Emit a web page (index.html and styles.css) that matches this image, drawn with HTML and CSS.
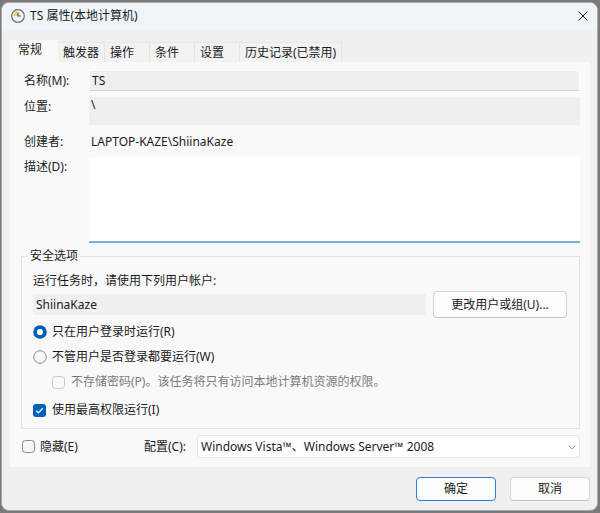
FILE: index.html
```html
<!DOCTYPE html>
<html>

<head>
    <meta charset="UTF-8">
    <title>TS 属性(本地计算机)</title>
    <link rel="stylesheet" href="styles.css">
</head>

<body>
    <div class="window">
        <div class="titlebar">
            <svg class="appIcon" width="14" height="14" viewBox="0 0 14 14">
                <circle cx="7" cy="7" r="6.3" fill="#f4f4f4" stroke="#6b6b6b" stroke-width="1.2"/>
                <path d="M7 7V2.3A4.7 4.7 0 0 0 2.3 7Z" fill="#f1cd72"/>
                <path d="M7 3.4V7h2.8" fill="none" stroke="#4a4a4a" stroke-width="1.1"/>
            </svg>
            <span class="title">TS 属性(本地计算机)</span>
            <svg class="closeIcon" width="10" height="10" viewBox="0 0 10 10">
                <path d="M0.5 0.5l9 9M9.5 0.5l-9 9" stroke="#1a1a1a" stroke-width="1"/>
            </svg>
        </div>
        <div class="content">
            <div class="tabs">
                <div class="tab active">常规</div>
                <div class="tab">触发器</div>
                <div class="tab">操作</div>
                <div class="tab">条件</div>
                <div class="tab">设置</div>
                <div class="tab">历史记录(已禁用)</div>
            </div>
            <div class="panel">
                <div class="row">
                    <label class="label">名称(M):</label>
                    <div class="field nameField">TS</div>
                </div>
                <div class="row topRow locationRow">
                    <label class="label">位置:</label>
                    <div class="field locationField">\</div>
                </div>
                <div class="row creatorRow">
                    <label class="label">创建者:</label>
                    <div class="field plainField">LAPTOP-KAZE\ShiinaKaze</div>
                </div>
                <div class="row topRow descRow">
                    <label class="label">描述(D):</label>
                    <div class="field descField"></div>
                </div>
                <fieldset class="group">
                    <legend>安全选项</legend>
                    <div class="groupText">运行任务时，请使用下列用户帐户:</div>
                    <div class="userRow">
                        <div class="userField">ShiinaKaze</div>
                        <button class="btn userBtn">更改用户或组(U)...</button>
                    </div>
                    <div class="option firstOption">
                        <svg class="mark" width="14" height="14" viewBox="0 0 14 14">
                            <circle cx="7" cy="7" r="6.8" fill="#005fb8"/>
                            <circle cx="7" cy="7" r="3.1" fill="#ffffff"/>
                        </svg>
                        <span>只在用户登录时运行(R)</span>
                    </div>
                    <div class="option">
                        <svg class="mark" width="14" height="14" viewBox="0 0 14 14">
                            <circle cx="7" cy="7" r="6.3" fill="#f6f6f6" stroke="#8a8a8a" stroke-width="1"/>
                        </svg>
                        <span>不管用户是否登录都要运行(W)</span>
                    </div>
                    <div class="option disabled">
                        <svg class="mark box" width="13" height="13" viewBox="0 0 13 13">
                            <rect x="0.5" y="0.5" width="12" height="12" rx="3" fill="#f9f9f9" stroke="#c8c8c8"/>
                        </svg>
                        <span>不存储密码(P)。该任务将只有访问本地计算机资源的权限。</span>
                    </div>
                    <div class="option lastOption">
                        <svg class="mark box" width="13" height="13" viewBox="0 0 13 13">
                            <rect width="13" height="13" rx="3" fill="#005fb8"/>
                            <path d="M3.2 6.7l2.2 2.2 4.4-4.7" fill="none" stroke="#ffffff" stroke-width="1.3"/>
                        </svg>
                        <span>使用最高权限运行(I)</span>
                    </div>
                </fieldset>
                <div class="bottomRow">
                    <div class="hideCheck">
                        <svg class="mark box" width="13" height="13" viewBox="0 0 13 13">
                            <rect x="0.5" y="0.5" width="12" height="12" rx="3" fill="#f6f6f6" stroke="#8a8a8a"/>
                        </svg>
                        <span>隐藏(E)</span>
                    </div>
                    <label class="configLabel">配置(C):</label>
                    <div class="select">
                        <span>Windows Vista™、Windows Server™ 2008</span>
                        <svg class="chevron" width="8" height="5" viewBox="0 0 8 5">
                            <path d="M0.5 0.5l3.5 3.5 3.5-3.5" fill="none" stroke="#a0a0a0" stroke-width="1"/>
                        </svg>
                    </div>
                </div>
            </div>
            <div class="actions">
                <button class="btn default">确定</button>
                <button class="btn">取消</button>
            </div>
        </div>
    </div>
</body>

</html>
```

FILE: styles.css
```css
html {
    background: #7a7a7a;
}
body {
    margin: 0;
    font-family: "Noto Sans", "Noto Sans CJK SC", sans-serif;
    font-size: 12px;
    line-height: 16px;
    color: #1b1b1b;
}
.window {
    box-sizing: border-box;
    width: 597px;
    height: 509px;
    margin: 2px 0 0 1px;
    border: 1px solid #ababab;
    border-radius: 8px;
    background: #f0f0f0;
    overflow: hidden;
    display: flex;
    flex-direction: column;
}
.titlebar {
    box-sizing: border-box;
    height: 27px;
    padding: 0 9px 2px 9px;
    background: #eff4f9;
    display: flex;
    align-items: center;
}
.appIcon {
    margin-right: 5px;
}
.title {
    flex: 1;
}
.content {
    display: flex;
    flex-direction: column;
    padding: 10px 7px 0 8px;
}
.tabs {
    display: flex;
    align-items: flex-end;
    height: 22px;
}
.tab {
    box-sizing: border-box;
    height: 20px;
    min-width: 45px;
    padding: 0 5px;
    line-height: 20px;
    background: #f2f2f2;
    border-right: 1px solid #e4e4e4;
    border-top: 1px solid #e8e8e8;
}
.tab.active {
    width: 48px;
    height: 22px;
    padding-left: 8px;
    line-height: 20px;
    background: #f9f9f9;
    border: none;
}

.panel {
    box-sizing: border-box;
    height: 405px;
    padding: 8px 10px 8px 14px;
    background: #f9f9f9;
}
.row {
    display: flex;
    align-items: center;
}
.row .label {
    flex: none;
    width: 65px;
}
.topRow {
    align-items: flex-start;
}
.topRow .label {
    margin-top: 2px;
}
.field {
    flex: 1;
    box-sizing: border-box;
    padding-left: 2px;
}
.nameField {
    height: 21px;
    line-height: 19px;
    background: #efefef;
    border: 1px solid #fdfdfd;
    border-bottom-color: #d3d3d3;
}
.locationRow {
    margin-top: 6px;
}
.locationField {
    height: 28px;
    background: #efefef;
}
.creatorRow {
    margin-top: 8px;
    height: 18px;
}
.descRow {
    margin-top: 6px;
}
.descField {
    height: 86px;
    background: #ffffff;
    border-bottom: 2px solid #79aedd;
}

.group {
    margin: 5px 0 0 -3px;
    padding: 9px 12px 10px 11px;
    border: 1px solid #e3e3e3;
    min-width: 0;
}
.group legend {
    margin-left: -5px;
    padding: 0 2px;
}
.userRow {
    display: flex;
    align-items: center;
    height: 27px;
    margin-top: 2px;
}
.userField {
    flex: 1;
    height: 21px;
    line-height: 21px;
    padding-left: 3px;
    background: #f0f0f0;
}
.userBtn {
    width: 134px;
    height: 27px;
    margin-left: 7px;
}
.option {
    display: flex;
    align-items: center;
    height: 16px;
    margin-top: 9px;
}
.option.firstOption {
    margin-top: 6px;
}
.option.lastOption {
    margin-top: 12px;
}
.option.disabled {
    padding-left: 19px;
    color: #7b7b7b;
}
.mark {
    flex: none;
    margin-right: 5px;
}
.mark.box {
    margin-right: 6px;
}
.option.disabled .mark {
    margin-right: 6px;
}

.bottomRow {
    display: flex;
    align-items: center;
    height: 23px;
    margin: 6px 0 0 -2px;
}
.hideCheck {
    display: flex;
    align-items: center;
    width: 122px;
}
.hideCheck .mark {
    margin-right: 5px;
}
.configLabel {
    width: 53px;
}
.select {
    flex: 1;
    box-sizing: border-box;
    height: 23px;
    padding: 0 3px 0 3px;
    display: flex;
    align-items: center;
    justify-content: space-between;
    background: #ffffff;
    border: 1px solid #e6e6e6;
    border-radius: 4px;
}
.chevron {
    margin-top: 1px;
}

.actions {
    display: flex;
    justify-content: flex-end;
    gap: 14px;
    margin-top: 10px;
}
.btn {
    font: inherit;
    color: #1b1b1b;
    background: #fdfdfd;
    border: 1px solid #d3d3d3;
    border-bottom-color: #c2c2c2;
    border-radius: 4px;
    padding: 0;
    outline: none;
}
.actions .btn {
    width: 80px;
    height: 24px;
}
.btn.default {
    border: 1px solid #2f7fd1;
}
```
